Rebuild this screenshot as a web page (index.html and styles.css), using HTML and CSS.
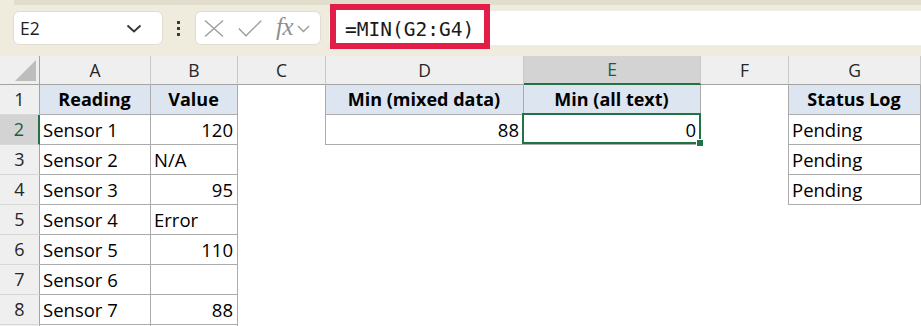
FILE: index.html
```html
<!DOCTYPE html>
<html>
<head>
<meta charset="utf-8">
<link rel="stylesheet" href="styles.css">
</head>
<body>
<div class="app">
  <div class="toolbar">
    <div class="namebox">
      <span class="name">E2</span>
      <svg class="nb-chev" width="16" height="9" viewBox="0 0 16 9"><path d="M1.5 1.5 L8 7.5 L14.5 1.5" fill="none" stroke="#333" stroke-width="1.8"/></svg>
    </div>
    <div class="dots"><i></i><i></i><i></i></div>
    <div class="fbtns">
      <svg class="ic-x" width="20" height="17" viewBox="0 0 20 17"><path d="M1 0.5 L19 16.5 M19 0.5 L1 16.5" stroke="#9a9a9a" stroke-width="1.3" fill="none"/></svg>
      <svg class="ic-check" width="24" height="17" viewBox="0 0 24 17"><path d="M0.8 8.5 L8 15.8 L23.2 0.8" stroke="#9a9a9a" stroke-width="1.3" fill="none"/></svg>
      <span class="fx">fx</span>
      <svg class="ic-chev" width="13" height="8" viewBox="0 0 13 8"><path d="M1 1 L6.5 6.5 L12 1" fill="none" stroke="#9a9a9a" stroke-width="1.4"/></svg>
    </div>
    <div class="finput"><span class="formula">=MIN(G2:G4)</span></div>
  </div>
  <div class="sheet">
    <div class="corner"><svg width="21" height="21" viewBox="0 0 21 21"><polygon points="21,0 21,21 0,21" fill="#bdbdbd"/></svg></div>
    <div class="ch">A</div>
    <div class="ch">B</div>
    <div class="ch">C</div>
    <div class="ch">D</div>
    <div class="ch ch-sel">E</div>
    <div class="ch">F</div>
    <div class="ch">G</div>

    <div class="rh">1</div>
    <div class="c t hd">Reading</div>
    <div class="c t hd">Value</div>
    <div class="c br"></div>
    <div class="c t hd">Min (mixed data)</div>
    <div class="c t hd">Min (all text)</div>
    <div class="c br"></div>
    <div class="c t hd">Status Log</div>

    <div class="rh rh-sel">2</div>
    <div class="c t">Sensor 1</div>
    <div class="c t num">120</div>
    <div class="c br"></div>
    <div class="c t num">88</div>
    <div class="c t num sel">0<span class="selbox"><span class="handle"></span></span></div>
    <div class="c br"></div>
    <div class="c t">Pending</div>

    <div class="rh">3</div>
    <div class="c t">Sensor 2</div>
    <div class="c t">N/A</div>
    <div class="c"></div>
    <div class="c"></div>
    <div class="c"></div>
    <div class="c br"></div>
    <div class="c t">Pending</div>

    <div class="rh">4</div>
    <div class="c t">Sensor 3</div>
    <div class="c t num">95</div>
    <div class="c"></div>
    <div class="c"></div>
    <div class="c"></div>
    <div class="c br"></div>
    <div class="c t">Pending</div>

    <div class="rh">5</div>
    <div class="c t">Sensor 4</div>
    <div class="c t">Error</div>
    <div class="c"></div><div class="c"></div><div class="c"></div><div class="c"></div><div class="c"></div>

    <div class="rh">6</div>
    <div class="c t">Sensor 5</div>
    <div class="c t num">110</div>
    <div class="c"></div><div class="c"></div><div class="c"></div><div class="c"></div><div class="c"></div>

    <div class="rh">7</div>
    <div class="c t">Sensor 6</div>
    <div class="c t"></div>
    <div class="c"></div><div class="c"></div><div class="c"></div><div class="c"></div><div class="c"></div>

    <div class="rh">8</div>
    <div class="c t">Sensor 7</div>
    <div class="c t num">88</div>
    <div class="c"></div><div class="c"></div><div class="c"></div><div class="c"></div><div class="c"></div>

    <div class="rh"></div>
    <div class="c t"></div>
    <div class="c t"></div>
    <div class="c"></div><div class="c"></div><div class="c"></div><div class="c"></div><div class="c"></div>
  </div>
</div>
</body>
</html>
```

FILE: styles.css
```css
html, body {
  margin: 0;
  padding: 0;
  background: #ffffff;
}
.app {
  width: 921px;
  height: 326px;
  overflow: hidden;
  font-family: "Open Sans", "Noto Sans", sans-serif;
}
.toolbar {
  height: 56px;
  box-sizing: border-box;
  display: flex;
  align-items: center;
  padding-left: 13px;
  background: linear-gradient(#e1decd, #e1decd) 14px 0 / 100% 5px no-repeat, #efecdd;
}
.namebox {
  width: 150px;
  height: 34px;
  box-sizing: border-box;
  background: #fff;
  border: 1px solid #e0ddd1;
  border-radius: 6px;
  display: flex;
  align-items: center;
  padding: 0 20px 0 6px;
  justify-content: space-between;
}
.name {
  font-size: 17.5px;
  color: #1f1f1f;
}
.dots {
  width: 3px;
  margin: 0 15px 0 14px;
  display: flex;
  flex-direction: column;
  gap: 3px;
}
.dots i {
  display: block;
  width: 3px;
  height: 3px;
  background: #3a3a3a;
}
.fbtns {
  width: 126px;
  height: 34px;
  box-sizing: border-box;
  background: #fff;
  border: 1px solid #e0ddd1;
  border-radius: 6px;
  display: flex;
  align-items: center;
  padding-left: 8px;
}
.ic-x { margin-right: 14px; }
.ic-check { margin-right: 14px; }
.fx {
  font-family: "Liberation Serif", "DejaVu Serif", serif;
  font-style: italic;
  font-size: 25px;
  color: #8f8f8f;
  line-height: 1;
  margin-right: 4px;
  margin-top: -3px;
  letter-spacing: -0.5px;
}
.ic-chev { margin-top: 2px; }
.finput {
  flex: 1;
  margin-left: 8px;
  height: 34px;
  background: #fff;
  border-radius: 6px 0 0 6px;
  display: flex;
  align-items: flex-start;
}
.formula {
  box-sizing: border-box;
  height: 45px;
  margin-top: -7px;
  margin-left: 1px;
  border: 6px solid #e11d48;
  padding: 5px 10px 0 9px;
  display: inline-flex;
  align-items: center;
  font-family: "DejaVu Sans Mono", "Liberation Mono", monospace;
  font-size: 19.5px;
  color: #1a1a1a;
  background: #fff;
}
.sheet {
  display: grid;
  grid-template-columns: 40px 111px 87px 88px 198px 177px 88px 132px;
  grid-template-rows: 29px;
  grid-auto-rows: 30px;
}
.corner {
  box-sizing: border-box;
  background: #efefef;
  border-right: 1px solid #a3a3a3;
  border-bottom: 1px solid #a3a3a3;
  display: flex;
  justify-content: flex-end;
  align-items: flex-end;
  padding: 0 3px 3px 0;
}
.ch {
  box-sizing: border-box;
  background: #efefef;
  border-right: 1px solid #c9c9c9;
  border-bottom: 1px solid #a3a3a3;
  text-align: center;
  font-size: 17.5px;
  line-height: 28px;
  color: #262626;
}
.ch-sel {
  background: #d3d3d3;
  border-bottom: 2px solid #217346;
  line-height: 27px;
  color: #1d5c3a;
}
.rh {
  box-sizing: border-box;
  background: #efefef;
  border-right: 1px solid #a3a3a3;
  border-bottom: 1px solid #d8d8d8;
  text-align: center;
  font-size: 18px;
  line-height: 29px;
  color: #262626;
}
.rh-sel {
  background: #d3d3d3;
  border-right: 2px solid #217346;
  color: #1d5c3a;
}
.c {
  box-sizing: border-box;
  padding: 0 4px 0 3px;
  font-size: 18.5px;
  line-height: 29px;
  color: #000;
  white-space: nowrap;
  overflow: visible;
}
.t {
  border-right: 1px solid #ababab;
  border-bottom: 1px solid #ababab;
}
.br {
  border-right: 1px solid #ababab;
}
.hd {
  background: #dde6f0;
  font-weight: 700;
  font-size: 18px;
  text-align: center;
}
.num {
  text-align: right;
}
.sel {
  position: relative;
}
.selbox {
  position: absolute;
  left: -2px;
  top: -2px;
  right: -1px;
  bottom: 0;
  border: 2px solid #217346;
}
.handle {
  position: absolute;
  right: -5px;
  bottom: -5px;
  width: 6px;
  height: 6px;
  background: #217346;
  border: 1px solid #fff;
}
```
